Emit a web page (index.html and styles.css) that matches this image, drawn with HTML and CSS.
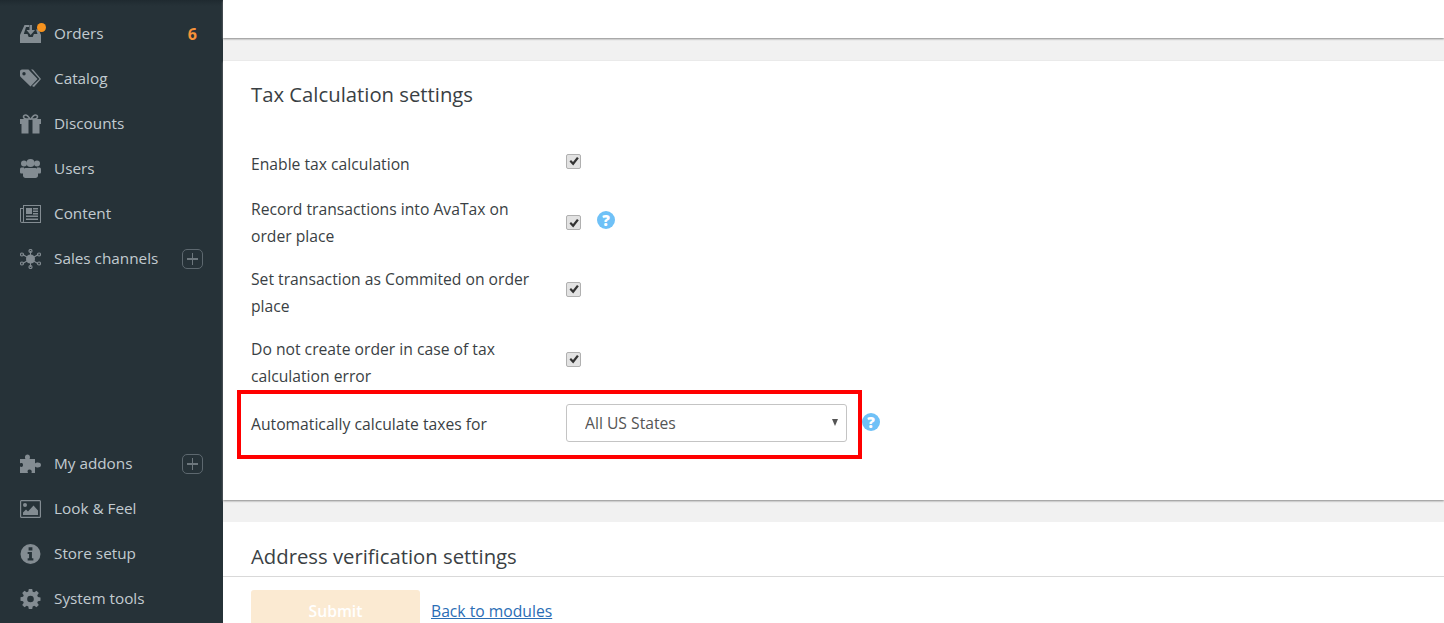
FILE: index.html
```html
<!DOCTYPE html>
<html lang="en">
<head>
    <meta charset="UTF-8">
    <title>Tax Calculation settings</title>
    <link rel="stylesheet" href="styles.css">
</head>
<body>
    <nav class="sidebar">
        <ul class="nav-group">
            <li class="nav-item">
                <svg class="nav-icon" viewBox="0 0 21 20"><path d="M4.500 1H9v2H6L3.800 10H7.500l1.200 3h4l1.200-3h3.600L16 5.500h2.500L21 11v8H0v-8z"/><path d="M9.500 1h2.500v5h3l-4.300 5L6.500 6h3z"/></svg>
                <span class="order-dot"></span>
                <span class="nav-label">Orders</span>
                <span class="nav-count">6</span>
            </li>
            <li class="nav-item">
                <svg class="nav-icon" viewBox="0 0 21 20"><path fill-rule="evenodd" d="M0 2.500C0 1.400.9.500 2 .500h6.500l9 9.500-7 7.500L.7 8C.2 7.500 0 7 0 6.500zM4 3a1.700 1.700 0 1 0 0 3.400A1.700 1.700 0 0 0 4 3z"/><path d="M11 .500h2l8 9.500-7 8-2-1 7.500-7z"/></svg>
                <span class="nav-label">Catalog</span>
            </li>
            <li class="nav-item">
                <svg class="nav-icon" viewBox="0 0 21 20"><path fill-rule="evenodd" d="M0 5h21v5h-1.500v9.500h-18V10H0zM8.500 5v14.500h4V5z"/><g fill="none" stroke="currentColor" stroke-width="1.600"><path d="M10 5C8.500 2.500 7 1 5.500 1 3.500 1 3 3 4 4c.6.700 1.500 1 2.500 1z"/><path d="M11 5c1.500-2.500 3-4 4.500-4 2 0 2.500 2 1.500 3-.6.700-1.500 1-2.500 1z"/></g></svg>
                <span class="nav-label">Discounts</span>
            </li>
            <li class="nav-item">
                <svg class="nav-icon" viewBox="0 0 21 20"><circle cx="4" cy="4.500" r="3"/><circle cx="17" cy="4.500" r="3"/><circle cx="10.500" cy="4" r="4"/><path d="M5.500 9h10c1.500 0 2.500 1.500 2.500 3v4.500c0 1.500-1 2.500-2.500 2.500h-10C4 19 3 18 3 16.500V12c0-1.500 1-3 2.500-3z"/><path d="M1.500 8.500H4v6H1.500C.5 14.500 0 14 0 13v-2.500C0 9.300.5 8.500 1.500 8.500zM17 8.500h2.500c1 0 1.500.8 1.500 2V13c0 1-.5 1.500-1.500 1.500H17z"/></svg>
                <span class="nav-label">Users</span>
            </li>
            <li class="nav-item">
                <svg class="nav-icon" viewBox="0 0 21 18"><path fill-rule="evenodd" d="M3 0h18v18H2c-1.200 0-2-.8-2-2V3h3zm1 1v15.500c0 .3-.2.5-.5.5H20V1zM1 4v12c0 .6.400 1 1 1 .6 0 1-.4 1-1V4z"/><path fill-rule="evenodd" d="M6 3h6v6H6zM13 3h5v1.500h-5zM13 5.500h5V7h-5zM13 8h5v1.500h-5zM6 10.500h12V12H6zM6 13.500h12V15H6z"/></svg>
                <span class="nav-label">Content</span>
            </li>
            <li class="nav-item">
                <svg class="nav-icon" viewBox="0 0 21 20"><circle cx="10.500" cy="10" r="4.500"/><path d="M10 2h1v5h-1zM10 13h1v5h-1zM3 5l5 3-.5.900-5-3zM13 11l5 3-.5.900-5-3zM2.500 14l5-3 .5.900-5 3zM13 8l5-3 .5.900-5 3z" /><g fill="none" stroke="currentColor" stroke-width="1.200"><circle cx="10.500" cy="2" r="1.500"/><circle cx="10.500" cy="18" r="1.500"/><circle cx="2" cy="5.500" r="1.500"/><circle cx="19" cy="5.500" r="1.500"/><circle cx="2" cy="14.500" r="1.500"/><circle cx="19" cy="14.500" r="1.500"/></g></svg>
                <span class="nav-label">Sales channels</span>
                <span class="nav-plus"></span>
            </li>
        </ul>
        <ul class="nav-group">
            <li class="nav-item">
                <svg class="nav-icon" viewBox="0 0 21 20"><path d="M0 5h5.500C4.500 3.500 5 .500 7.500 .500S10.500 3.500 9.500 5H15v4.500c1.500-1.500 6-1.500 6 1.500s-4.500 3-6 1.500V19h-3.500c.8-2-.2-3.500-2-3.500S7 17 8 19H0v-6.500c1.500 1 3 .5 3-1.500S1.500 8.500 0 9.500z"/></svg>
                <span class="nav-label">My addons</span>
                <span class="nav-plus"></span>
            </li>
            <li class="nav-item">
                <svg class="nav-icon" viewBox="0 0 21 18"><path fill-rule="evenodd" d="M1.500 0h18C20.300 0 21 .7 21 1.500v15c0 .8-.7 1.500-1.500 1.500h-18C.7 18 0 17.300 0 16.500v-15C0 .7.700 0 1.500 0zM1.500 1.200c-.2 0-.3.100-.3.300v15c0 .2.100.3.300.3h18c.2 0 .3-.1.300-.3v-15c0-.2-.1-.3-.3-.3z"/><circle cx="5" cy="5" r="2"/><path d="M3 15v-2.500L6 9.500l2 2L13.500 5.500 18 10.500V15z"/></svg>
                <span class="nav-label">Look &amp; Feel</span>
            </li>
            <li class="nav-item">
                <svg class="nav-icon" viewBox="0 0 21 21"><path fill-rule="evenodd" d="M10.500 0a10.500 10.500 0 1 1 0 21 10.500 10.500 0 0 1 0-21zM8.500 3.500v3.200h4V3.500zM7.500 8.500v2h1.500V15H7.500v2.200h6V15H12V8.500z"/></svg>
                <span class="nav-label">Store setup</span>
            </li>
            <li class="nav-item">
                <svg class="nav-icon" viewBox="0 0 21 21"><path fill-rule="evenodd" d="M8.700 0h3.600l.5 2.800 1.700.7L16.800 1.900l2.400 2.400-1.600 2.300.7 1.700 2.700.5v3.500l-2.700.5-.7 1.700 1.600 2.300-2.400 2.400-2.300-1.600-1.700.7-.5 2.700H8.700l-.5-2.700-1.700-.7-2.300 1.600-2.400-2.400 1.600-2.300-.7-1.700L0 12.300V8.700l2.700-.5.7-1.700-1.600-2.300 2.400-2.400 2.300 1.600 1.700-.7zM10.500 7a3.500 3.500 0 1 0 0 7 3.500 3.500 0 0 0 0-7z"/></svg>
                <span class="nav-label">System tools</span>
            </li>
        </ul>
    </nav>

    <main class="content">
        <div class="top-strip"></div>

        <section class="card tax-card">
            <h2 class="card-title">Tax Calculation settings</h2>
            <div class="form-row row-enable">
                <label class="form-label">Enable tax calculation</label>
                <span class="check"><svg viewBox="0 0 12 12"><path d="M1.500 6.500 3 5l2 2 4-5 1.800 1.300L5.200 10.500z"/></svg></span>
            </div>
            <div class="form-row">
                <label class="form-label">Record transactions into AvaTax on order place</label>
                <span class="check check-mid"><svg viewBox="0 0 12 12"><path d="M1.500 6.500 3 5l2 2 4-5 1.800 1.300L5.200 10.500z"/></svg></span>
                <span class="help help-raised">?</span>
            </div>
            <div class="form-row">
                <label class="form-label">Set transaction as Commited on order place</label>
                <span class="check"><svg viewBox="0 0 12 12"><path d="M1.500 6.500 3 5l2 2 4-5 1.800 1.300L5.200 10.500z"/></svg></span>
            </div>
            <div class="form-row">
                <label class="form-label">Do not create order in case of tax calculation error</label>
                <span class="check"><svg viewBox="0 0 12 12"><path d="M1.500 6.500 3 5l2 2 4-5 1.800 1.300L5.200 10.500z"/></svg></span>
            </div>
            <div class="form-row row-marked">
                <label class="form-label">Automatically calculate taxes for</label>
                <div class="select-wrap">
                    <select class="select">
                        <option>All US States</option>
                    </select>
                </div>
                <span class="help help-select">?</span>
            </div>
        </section>

        <section class="card address-card">
            <h2 class="card-title">Address verification settings</h2>
            <div class="actions">
                <button class="submit-btn" type="button">Submit</button>
                <a class="back-link" href="#">Back to modules</a>
            </div>
        </section>
    </main>
</body>
</html>
```

FILE: styles.css
```css
* {
    margin: 0;
    padding: 0;
    box-sizing: border-box;
}

html, body {
    height: 623px;
    overflow: hidden;
}

body {
    display: flex;
    font-family: "Open Sans", Arial, sans-serif;
    font-size: 15.7px;
    color: #3a3f44;
    background-color: #f1f1f1;
}

/* left menu */
.sidebar {
    width: 223px;
    height: 623px;
    flex-shrink: 0;
    display: flex;
    flex-direction: column;
    justify-content: space-between;
    padding: 11px 0 2px;
    background: linear-gradient(#1f2a30, #263238 6px);
}

.nav-group {
    list-style: none;
}

.nav-item {
    position: relative;
    display: flex;
    align-items: center;
    height: 45px;
    padding: 0 20px;
    font-size: 15.3px;
}

.nav-icon {
    width: 21px;
    height: 20px;
    flex-shrink: 0;
    margin-right: 13px;
    fill: #838c92;
    color: #838c92;
}

.nav-label {
    flex: 1;
    padding-bottom: 2px;
    color: #c2cbd0;
}

.order-dot {
    position: absolute;
    left: 37px;
    top: 12px;
    width: 9px;
    height: 9px;
    border-radius: 50%;
    background-color: #f7931e;
}

.nav-count {
    margin-right: 6px;
    font-size: 16px;
    font-weight: 700;
    color: #f7923a;
}

.nav-plus {
    position: relative;
    width: 21px;
    height: 20px;
    border: 1px solid #5d686f;
    border-radius: 5px;
}

.nav-plus::before,
.nav-plus::after {
    content: "";
    position: absolute;
    background-color: #6d777d;
}

.nav-plus::before {
    left: 4px;
    right: 4px;
    top: 8px;
    height: 2px;
}

.nav-plus::after {
    top: 3px;
    bottom: 3px;
    left: 9px;
    width: 1px;
}

/* main column */
.content {
    flex: 1;
    min-width: 0;
}

.top-strip {
    height: 38px;
    background-color: #fff;
    box-shadow: 0 1px 2px #888;
}

.card {
    background-color: #fff;
}

.card-title {
    font-size: 20.3px;
    font-weight: 400;
    line-height: 27px;
    color: #3a3f44;
}

.tax-card {
    margin-top: 23px;
    height: 439px;
    padding: 20px 28px 0;
    box-shadow: 0 1px 2px #888;
}

.form-row {
    display: flex;
    align-items: center;
    margin-bottom: 16px;
    line-height: 27px;
}

.row-enable {
    margin-top: 43px;
    margin-bottom: 18px;
}

.form-label {
    width: 315px;
    flex-shrink: 0;
    padding-right: 25px;
}

.check {
    display: flex;
    align-items: center;
    justify-content: center;
    width: 15px;
    height: 15px;
    margin-top: -8px;
    border: 1px solid #b0b0b0;
    border-radius: 2px;
    background-color: #e2e2e2;
}

.row-enable .check {
    margin-top: -7px;
}

.check-mid {
    margin-top: -1px;
}

.check svg {
    width: 12px;
    height: 12px;
    fill: #333;
}

.help {
    width: 18px;
    height: 18px;
    margin-left: 16px;
    flex-shrink: 0;
    border-radius: 50%;
    background-color: #6fc1f7;
    color: #fff;
    font-size: 15px;
    font-weight: 800;
    line-height: 18px;
    text-align: center;
}

.help-raised {
    margin-top: -7px;
}

.help-select {
    margin-left: 15px;
    margin-top: -6px;
}

/* the red box round the last row */
.row-marked {
    width: 625px;
    height: 69px;
    margin: -16px 0 0 -14px;
    padding-left: 10px;
    border: 4px solid #f00;
}

.select-wrap {
    position: relative;
    width: 281px;
    flex-shrink: 0;
    margin-top: -3px;
}

.select-wrap::after {
    content: "";
    position: absolute;
    right: 9px;
    top: 15px;
    border-left: 3.500px solid transparent;
    border-right: 3.500px solid transparent;
    border-top: 7px solid #555;
}

.select {
    display: block;
    width: 100%;
    height: 38px;
    padding: 0 18px;
    appearance: none;
    border: 1px solid #c4c4c4;
    border-radius: 3px;
    background-color: #fff;
    font-family: inherit;
    font-size: 15.7px;
    color: #555;
}

.address-card {
    margin-top: 22px;
    height: 120px;
    padding-top: 21px;
}

.address-card .card-title {
    height: 33px;
    padding-left: 28px;
    border-bottom: 1px solid #d9d9d9;
    box-sizing: content-box;
}

.actions {
    display: flex;
    align-items: center;
    gap: 11px;
    margin-top: 13px;
    padding-left: 28px;
}

.submit-btn {
    width: 169px;
    height: 42px;
    border: none;
    border-radius: 3px;
    background-color: #fbead2;
    color: #fff;
    font-family: inherit;
    font-size: 15.7px;
    font-weight: 600;
}

.back-link {
    color: #2a6db5;
}
```
